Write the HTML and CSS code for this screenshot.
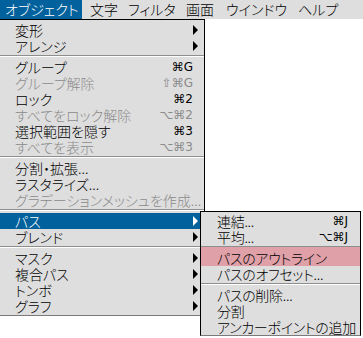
FILE: index.html
```html
<!DOCTYPE html>
<html lang="ja">
<head>
<meta charset="utf-8">
<title>オブジェクト menu</title>
<link rel="stylesheet" href="styles.css">
</head>
<body>
<div class="menubar">
  <span class="mb-item active">オブジェクト</span>
  <span class="mb-item">文字</span>
  <span class="mb-item">フィルタ</span>
  <span class="mb-item">画面</span>
  <span class="mb-item">ウインドウ</span>
  <span class="mb-item">ヘルプ</span>
</div>
<div class="menu main">
  <div class="item"><span class="label">変形</span><span class="arrow"></span></div>
  <div class="item"><span class="label">アレンジ</span><span class="arrow"></span></div>
  <div class="sep"></div>
  <div class="item"><span class="label">グループ</span><span class="key">⌘G</span></div>
  <div class="item off"><span class="label">グループ解除</span><span class="key">⇧⌘G</span></div>
  <div class="item"><span class="label">ロック</span><span class="key">⌘2</span></div>
  <div class="item off"><span class="label">すべてをロック解除</span><span class="key">⌥⌘2</span></div>
  <div class="item"><span class="label">選択範囲を隠す</span><span class="key">⌘3</span></div>
  <div class="item off"><span class="label">すべてを表示</span><span class="key">⌥⌘3</span></div>
  <div class="sep"></div>
  <div class="item"><span class="label">分割・拡張...</span></div>
  <div class="item"><span class="label">ラスタライズ...</span></div>
  <div class="item off"><span class="label">グラデーションメッシュを作成...</span></div>
  <div class="sep"></div>
  <div class="item open"><span class="label">パス</span><span class="arrow"></span>
    <div class="menu submenu">
      <div class="item"><span class="label">連結...</span><span class="key">⌘J</span></div>
      <div class="item"><span class="label">平均...</span><span class="key">⌥⌘J</span></div>
      <div class="sep"></div>
      <div class="item marked"><span class="label">パスのアウトライン</span></div>
      <div class="item"><span class="label">パスのオフセット...</span></div>
      <div class="sep"></div>
      <div class="item"><span class="label">パスの削除...</span></div>
      <div class="item"><span class="label">分割</span></div>
      <div class="item"><span class="label">アンカーポイントの追加</span></div>
    </div>
  </div>
  <div class="item"><span class="label">ブレンド</span><span class="arrow"></span></div>
  <div class="sep"></div>
  <div class="item"><span class="label">マスク</span><span class="arrow"></span></div>
  <div class="item"><span class="label">複合パス</span><span class="arrow"></span></div>
  <div class="item"><span class="label">トンボ</span><span class="arrow"></span></div>
  <div class="item"><span class="label">グラフ</span><span class="arrow"></span></div>
</div>
</body>
</html>
```
FILE: styles.css
```css
html, body {
  margin: 0;
  padding: 0;
}
body {
  width: 363px;
  height: 338px;
  overflow: hidden;
  background: #ffffff;
  font-family: "Noto Sans CJK JP", "DejaVu Sans", sans-serif;
  font-size: 14px;
  font-weight: 300;
  font-feature-settings: "palt";
  color: #000;
}

.menubar {
  height: 19px;
  background: #dedede;
  display: grid;
  grid-template-columns: 85px 38px 58px 40px 72px 1fr;
  align-items: stretch;
}
.mb-item {
  padding-left: 5px;
  line-height: 18px;
  white-space: nowrap;
}
.mb-item.active {
  width: 82px;
  box-sizing: border-box;
  background: #00619c;
  color: #fff;
}

.menu {
  background: #dedede;
  border-top: 1px solid #000;
  border-right: 1px solid #000;
  border-bottom: 1px solid #7a7a7a;
}
.main {
  width: 204px;
  padding: 2px 0 1px;
}
.item {
  position: relative;
  height: 16px;
  display: flex;
  align-items: center;
  justify-content: space-between;
  padding: 0 6px 0 15px;
  white-space: nowrap;
}
.label {
  line-height: 16px;
}
.key {
  font-family: "DejaVu Sans", sans-serif;
  font-weight: 400;
  font-size: 12px;
  line-height: 16px;
  margin-right: 5px;
  font-feature-settings: normal;
}
.off {
  color: #8a8a8a;
}
.arrow {
  width: 0;
  height: 0;
  border-left: 5px solid #000;
  border-top: 5px solid transparent;
  border-bottom: 5px solid transparent;
}
.open {
  background: #00619c;
  color: #fff;
}
.open > .arrow {
  border-left-color: #fff;
}
.sep {
  margin: 1px 0 2px;
  border-top: 1px solid #8e8e8e;
  border-bottom: 1px solid #fff;
}

.submenu {
  position: absolute;
  left: 200px;
  top: -2px;
  width: 159px;
  border-left: 1px solid #000;
  padding-top: 1px;
  color: #000;
}
.submenu .item {
  padding: 0 12px 0 16px;
}
.submenu .label {
  letter-spacing: -0.3px;
}
.submenu .key {
  margin-right: 0;
}
.marked {
  background: #dfa0a8;
  box-shadow: 0 -3px 0 #dfa0a8;
}
```
